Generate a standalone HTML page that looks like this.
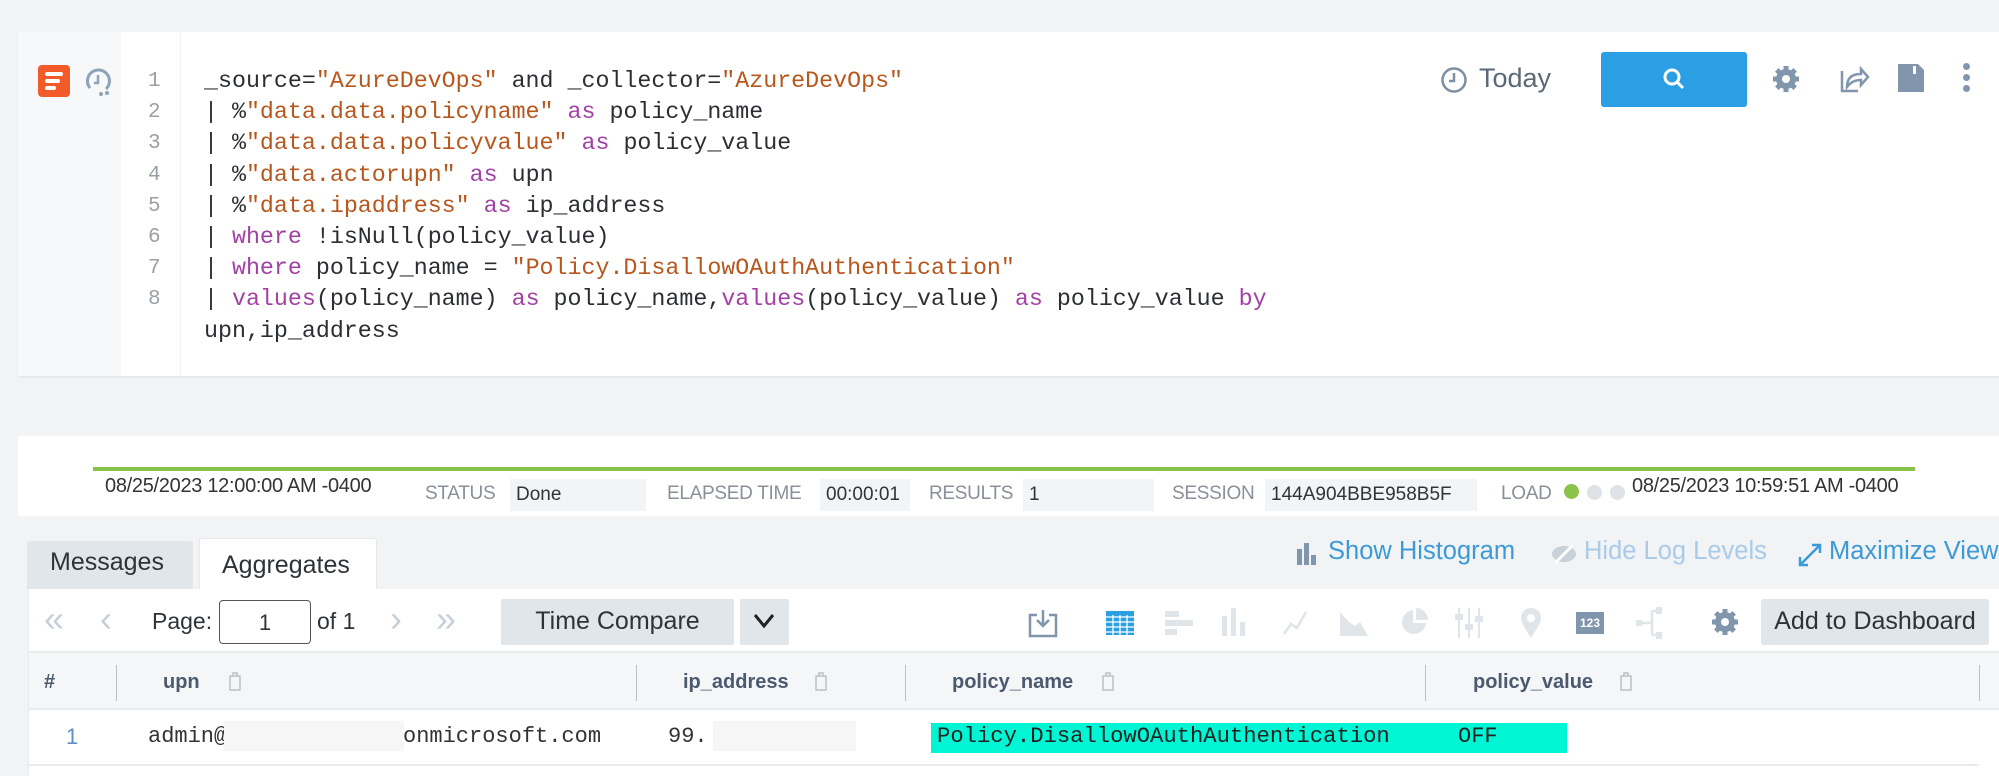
<!DOCTYPE html>
<html><head><meta charset="utf-8"><style>
*{margin:0;padding:0;box-sizing:border-box}
body{width:1999px;height:776px;background:#f1f3f5;font-family:"Liberation Sans",sans-serif;position:relative;overflow:hidden;color:#333}
.a{position:absolute;white-space:nowrap}
.code{font-family:"Liberation Mono",monospace;font-size:23.3px;color:#2b2f33}
.s{color:#b8561c}.k{color:#a340a6}
.ln{font-family:"Liberation Mono",monospace;font-size:21px;color:#9aa0a6}
.st{font-size:19px;color:#8a9099;top:476px;letter-spacing:-.3px}
.sv{background:#f2f5f8;height:32px;top:472px;font-size:19px;color:#333;padding:5px 6px}
.hd{font-size:20px;font-weight:bold;color:#4b5a6e;top:671px}
.mono{font-family:"Liberation Mono",monospace;font-size:22px;color:#333;top:724px}
.sep{position:absolute;width:1px;background:#b8c0c8;top:665px;height:36px}
</style></head><body>
<div class="a" style="left:18px;top:32px;width:1981px;height:344px;background:#fff;box-shadow:0 1px 2px rgba(0,0,0,.08)"></div>
<div class="a" style="left:18px;top:32px;width:103px;height:344px;background:#f6f8fa"></div>
<div class="a" style="left:180px;top:32px;width:1px;height:344px;background:#eef0f2"></div>
<div class="a" style="left:38px;top:65px;width:32px;height:32px;background:#f25a2a;border-radius:4px"></div>
<div class="a" style="left:45px;top:72px;width:18px;height:4px;background:#fff;border-radius:2px"></div>
<div class="a" style="left:45px;top:79px;width:15px;height:4px;background:#fff;border-radius:2px"></div>
<div class="a" style="left:45px;top:86px;width:11px;height:4px;background:#fff;border-radius:2px"></div>
<svg class="a" style="left:82px;top:66px" width="32" height="32" viewBox="0 0 32 32"><path d="M8 22A11 11 0 1 1 24 23" fill="none" stroke="#8fa3b8" stroke-width="3"/><path d="M16 9v8h-4" fill="none" stroke="#8fa3b8" stroke-width="2.5"/><circle cx="19" cy="28" r="2" fill="#8fa3b8"/><circle cx="25" cy="27" r="2" fill="#8fa3b8"/></svg>
<div class="a ln" style="left:148px;top:66px;line-height:31.2px">1<br>2<br>3<br>4<br>5<br>6<br>7<br>8</div>
<div class="a code" style="left:204px;top:66px;line-height:31.2px">_source=<span class="s">"AzureDevOps"</span> and _collector=<span class="s">"AzureDevOps"</span><br>| %<span class="s">"data.data.policyname"</span> <span class="k">as</span> policy_name<br>| %<span class="s">"data.data.policyvalue"</span> <span class="k">as</span> policy_value<br>| %<span class="s">"data.actorupn"</span> <span class="k">as</span> upn<br>| %<span class="s">"data.ipaddress"</span> <span class="k">as</span> ip_address<br>| <span class="k">where</span> !isNull(policy_value)<br>| <span class="k">where</span> policy_name = <span class="s">"Policy.DisallowOAuthAuthentication"</span><br>| <span class="k">values</span>(policy_name) <span class="k">as</span> policy_name,<span class="k">values</span>(policy_value) <span class="k">as</span> policy_value <span class="k">by</span><br>upn,ip_address</div>
<svg class="a" style="left:1440px;top:66px" width="28" height="28" viewBox="0 0 28 28"><circle cx="14" cy="14" r="11.5" fill="none" stroke="#7e8fa3" stroke-width="2.5"/><path d="M14 7v8h-5" fill="none" stroke="#7e8fa3" stroke-width="2.5"/></svg>
<div class="a" style="left:1479px;top:63px;font-size:27px;color:#5a6878">Today</div>
<div class="a" style="left:1601px;top:52px;width:146px;height:55px;background:#2b9fe3;border-radius:3px"></div>
<svg class="a" style="left:1661px;top:66px" width="26" height="26" viewBox="0 0 26 26"><circle cx="11" cy="11" r="7" fill="none" stroke="#fff" stroke-width="3"/><path d="M16 16l6 6" stroke="#fff" stroke-width="3"/></svg>
<svg class="a" style="left:1771px;top:64px" width="30" height="30" viewBox="0 0 30 30"><g fill="#8196ad"><circle cx="15" cy="15" r="10"/><g stroke="#8196ad" stroke-width="5"><path d="M15 2v26M2 15h26M5.8 5.8l18.4 18.4M24.2 5.8L5.8 24.2"/></g></g><circle cx="15" cy="15" r="4" fill="#fff"/></svg>
<svg class="a" style="left:1838px;top:63px" width="32" height="32" viewBox="0 0 32 32"><path d="M4 8v20h16" fill="none" stroke="#8196ad" stroke-width="2.5"/><path d="M9 24c0-10 6-13 14-13V6l7 8-7 8v-5c-6 0-10 2-14 7z" fill="none" stroke="#8196ad" stroke-width="2.5"/></svg>
<svg class="a" style="left:1897px;top:63px" width="28" height="30" viewBox="0 0 28 30"><path d="M1 1h20l6 6v22H1z" fill="#8196ad"/><rect x="16" y="3" width="3" height="8" fill="#fff"/></svg>
<div class="a" style="left:1963px;top:63px;width:7px;height:7px;border-radius:50%;background:#8196ad;box-shadow:0 11px 0 #8196ad,0 22px 0 #8196ad"></div>

<div class="a" style="left:18px;top:436px;width:1981px;height:80px;background:#fff"></div>
<div class="a" style="left:93px;top:467px;width:1822px;height:4px;background:#8bc34a"></div>
<div class="a" style="left:105px;top:475px;font-size:20px;color:#333;letter-spacing:-.3px">08/25/2023 12:00:00 AM -0400</div>
<div class="a st" style="left:425px;top:483px">STATUS</div>
<div class="a sv" style="left:510px;top:479px;width:136px">Done</div>
<div class="a st" style="left:667px;top:483px">ELAPSED TIME</div>
<div class="a sv" style="left:820px;top:479px;width:90px">00:00:01</div>
<div class="a st" style="left:929px;top:483px">RESULTS</div>
<div class="a sv" style="left:1023px;top:479px;width:131px">1</div>
<div class="a st" style="left:1172px;top:483px">SESSION</div>
<div class="a sv" style="left:1265px;top:479px;width:212px">144A904BBE958B5F</div>
<div class="a st" style="left:1501px;top:483px">LOAD</div>
<div class="a" style="left:1564px;top:484px;width:15px;height:15px;border-radius:50%;background:#8bc34a"></div>
<div class="a" style="left:1587px;top:485px;width:15px;height:15px;border-radius:50%;background:#dfe3e8"></div>
<div class="a" style="left:1610px;top:485px;width:15px;height:15px;border-radius:50%;background:#dfe3e8"></div>
<div class="a" style="left:1632px;top:475px;font-size:20px;color:#333;letter-spacing:-.3px">08/25/2023 10:59:51 AM -0400</div>

<div class="a" style="left:27px;top:541px;width:166px;height:48px;background:#e1e6eb;border-radius:3px 3px 0 0"></div>
<div class="a" style="left:50px;top:548px;font-size:25px;color:#2d3338">Messages</div>
<div class="a" style="left:199px;top:538px;width:178px;height:52px;background:#fff;border:1px solid #e6e9ec;border-bottom:none;border-radius:3px 3px 0 0"></div>
<div class="a" style="left:222px;top:551px;font-size:25px;color:#2d3338">Aggregates</div>
<svg class="a" style="left:1297px;top:543px" width="20" height="22" viewBox="0 0 20 22"><rect x="0" y="6" width="5" height="16" fill="#8196ad"/><rect x="7" y="0" width="5" height="22" fill="#8196ad"/><rect x="14" y="12" width="5" height="10" fill="#8196ad"/></svg>
<div class="a" style="left:1328px;top:537px;font-size:25.5px;color:#3c9ad8">Show Histogram</div>
<svg class="a" style="left:1551px;top:543px" width="26" height="22" viewBox="0 0 26 22"><ellipse cx="13" cy="11" rx="12" ry="8" fill="#c8d0d8"/><path d="M4 20L22 2" stroke="#fff" stroke-width="3"/></svg>
<div class="a" style="left:1584px;top:537px;font-size:25.5px;color:#a9cbe8">Hide Log Levels</div>
<svg class="a" style="left:1798px;top:543px" width="24" height="24" viewBox="0 0 24 24"><path d="M2 22L22 2M14 2h8v8M2 14v8h8" fill="none" stroke="#3c9ad8" stroke-width="2.5"/></svg>
<div class="a" style="left:1829px;top:537px;font-size:25.5px;color:#3c9ad8">Maximize View</div>

<div class="a" style="left:28px;top:589px;width:1971px;height:187px;background:#fff"></div>
<div class="a" style="left:44px;top:598px;font-size:36px;color:#c7cfd8;letter-spacing:-10px">«</div>
<div class="a" style="left:100px;top:598px;font-size:36px;color:#c7cfd8">‹</div>
<div class="a" style="left:152px;top:608px;font-size:23px;color:#2d3338">Page:</div>
<div class="a" style="left:219px;top:600px;width:92px;height:44px;border:1px solid #555;border-radius:4px;font-size:22px;text-align:center;padding-top:9px">1</div>
<div class="a" style="left:317px;top:608px;font-size:23px;color:#2d3338">of 1</div>
<div class="a" style="left:390px;top:598px;font-size:36px;color:#c7cfd8">›</div>
<div class="a" style="left:436px;top:598px;font-size:36px;color:#c7cfd8">»</div>
<div class="a" style="left:501px;top:599px;width:233px;height:46px;background:#e1e6eb;border-radius:2px;font-size:25px;color:#2d3338;text-align:center;padding-top:8px">Time Compare</div>
<div class="a" style="left:740px;top:599px;width:49px;height:46px;background:#e1e6eb;border-radius:2px"></div>
<svg class="a" style="left:753px;top:613px" width="22" height="16" viewBox="0 0 22 16"><path d="M2 2l9 11 9-11" fill="none" stroke="#222" stroke-width="3"/></svg>
<svg class="a" style="left:1028px;top:608px" width="30" height="30" viewBox="0 0 30 30"><path d="M9 7H2v21h26V7h-7" fill="none" stroke="#8196ad" stroke-width="2.5"/><path d="M15 2v16M9 12l6 6 6-6" fill="none" stroke="#8196ad" stroke-width="2.5"/></svg>
<svg class="a" style="left:1106px;top:611px" width="28" height="24" viewBox="0 0 28 24"><rect width="28" height="24" fill="#2b9fe3"/><path d="M0 6h28M0 11h28M0 16h28M0 21h28M7 4v20M14 4v20M21 4v20" stroke="#fff" stroke-width="1.3"/></svg>
<svg class="a" style="left:1165px;top:611px" width="28" height="24" viewBox="0 0 28 24"><rect width="14" height="6" fill="#e0e5ea"/><rect y="9" width="28" height="6" fill="#e0e5ea"/><rect y="18" width="12" height="6" fill="#e0e5ea"/></svg>
<svg class="a" style="left:1222px;top:608px" width="26" height="28" viewBox="0 0 26 28"><rect y="8" width="5" height="20" fill="#e0e5ea"/><rect x="9" width="5" height="28" fill="#e0e5ea"/><rect x="18" y="14" width="5" height="14" fill="#e0e5ea"/></svg>
<svg class="a" style="left:1282px;top:610px" width="26" height="26" viewBox="0 0 26 26"><path d="M2 24l7-10 6 4 9-16" fill="none" stroke="#e0e5ea" stroke-width="2.5"/></svg>
<svg class="a" style="left:1340px;top:610px" width="28" height="26" viewBox="0 0 28 26"><path d="M0 26V2l9 10 6 4 5-4 8 14z" fill="#e0e5ea"/></svg>
<svg class="a" style="left:1400px;top:608px" width="28" height="28" viewBox="0 0 28 28"><path d="M13 2A12 12 0 1 0 26 15H13z" fill="#e0e5ea"/><path d="M16 0v12h12A12 12 0 0 0 16 0z" fill="#e0e5ea"/></svg>
<svg class="a" style="left:1455px;top:608px" width="28" height="30" viewBox="0 0 28 30"><path d="M4 0v30M14 0v30M24 0v30" stroke="#e0e5ea" stroke-width="2"/><rect x="0" y="6" width="8" height="6" fill="#e0e5ea"/><rect x="10" y="16" width="8" height="6" fill="#e0e5ea"/><rect x="20" y="8" width="8" height="6" fill="#e0e5ea"/></svg>
<svg class="a" style="left:1520px;top:607px" width="22" height="32" viewBox="0 0 22 32"><path d="M11 31C4 20 1 15 1 11a10 10 0 0 1 20 0c0 4-3 9-10 20z" fill="#e0e5ea"/><circle cx="11" cy="11" r="4" fill="#fff"/></svg>
<div class="a" style="left:1576px;top:612px;width:28px;height:22px;background:#8196ad;color:#fff;font-size:12px;text-align:center;padding-top:4px;font-weight:bold">123</div>
<svg class="a" style="left:1636px;top:607px" width="28" height="32" viewBox="0 0 28 32"><path d="M6 16h10M16 4v24M16 4h6M16 28h6" fill="none" stroke="#e0e5ea" stroke-width="2.5"/><rect x="0" y="13" width="6" height="6" fill="#e0e5ea"/><rect x="20" y="0" width="6" height="7" fill="#e0e5ea"/><rect x="20" y="25" width="6" height="7" fill="#e0e5ea"/></svg>
<svg class="a" style="left:1710px;top:607px" width="30" height="30" viewBox="0 0 30 30"><g fill="#8196ad"><circle cx="15" cy="15" r="10"/><g stroke="#8196ad" stroke-width="5"><path d="M15 2v26M2 15h26M5.8 5.8l18.4 18.4M24.2 5.8L5.8 24.2"/></g></g><circle cx="15" cy="15" r="4" fill="#fff"/></svg>
<div class="a" style="left:1761px;top:599px;width:228px;height:46px;background:#e1e6eb;border-radius:3px;font-size:25px;color:#2d3338;text-align:center;padding-top:8px">Add to Dashboard</div>

<div class="a" style="left:28px;top:651px;width:1971px;height:2px;background:#e8ebee"></div>
<div class="a" style="left:28px;top:653px;width:1971px;height:57px;background:#f4f6f8;border-bottom:2px solid #e8ebee"></div>
<div class="a hd" style="left:44px">#</div>
<div class="sep" style="left:116px"></div>
<div class="a hd" style="left:163px">upn</div>
<div class="sep" style="left:636px"></div>
<div class="a hd" style="left:683px">ip_address</div>
<div class="sep" style="left:905px"></div>
<div class="a hd" style="left:952px">policy_name</div>
<div class="sep" style="left:1425px"></div>
<div class="a hd" style="left:1473px">policy_value</div>
<div class="sep" style="left:1979px"></div>
<svg class="a" style="left:228px;top:671px" width="14" height="20" viewBox="0 0 14 20"><path d="M2 5h10v14H2z M5 5V2h4v3" fill="none" stroke="#b8c0c8" stroke-width="1.5"/></svg>
<svg class="a" style="left:814px;top:671px" width="14" height="20" viewBox="0 0 14 20"><path d="M2 5h10v14H2z M5 5V2h4v3" fill="none" stroke="#b8c0c8" stroke-width="1.5"/></svg>
<svg class="a" style="left:1101px;top:671px" width="14" height="20" viewBox="0 0 14 20"><path d="M2 5h10v14H2z M5 5V2h4v3" fill="none" stroke="#b8c0c8" stroke-width="1.5"/></svg>
<svg class="a" style="left:1619px;top:671px" width="14" height="20" viewBox="0 0 14 20"><path d="M2 5h10v14H2z M5 5V2h4v3" fill="none" stroke="#b8c0c8" stroke-width="1.5"/></svg>
<div class="a" style="left:66px;top:724px;font-size:22px;color:#5d8fc0">1</div>
<div class="a mono" style="left:148px">admin@</div>
<div class="a" style="left:224px;top:721px;width:180px;height:30px;background:#f6f6f6"></div>
<div class="a mono" style="left:403px">onmicrosoft.com</div>
<div class="a mono" style="left:668px">99.</div>
<div class="a" style="left:713px;top:721px;width:143px;height:30px;background:#f6f6f6"></div>
<div class="a" style="left:931px;top:723px;width:636px;height:30px;background:#00f5d4"></div>
<div class="a mono" style="left:937px;color:#222;font-size:22.2px">Policy.DisallowOAuthAuthentication</div>
<div class="a mono" style="left:1458px;color:#222">OFF</div>
<div class="a" style="left:28px;top:764px;width:1951px;height:2px;background:#e8ebee"></div>
<div class="a" style="left:28px;top:589px;width:1px;height:187px;background:#e8ebee"></div>
</body></html>
